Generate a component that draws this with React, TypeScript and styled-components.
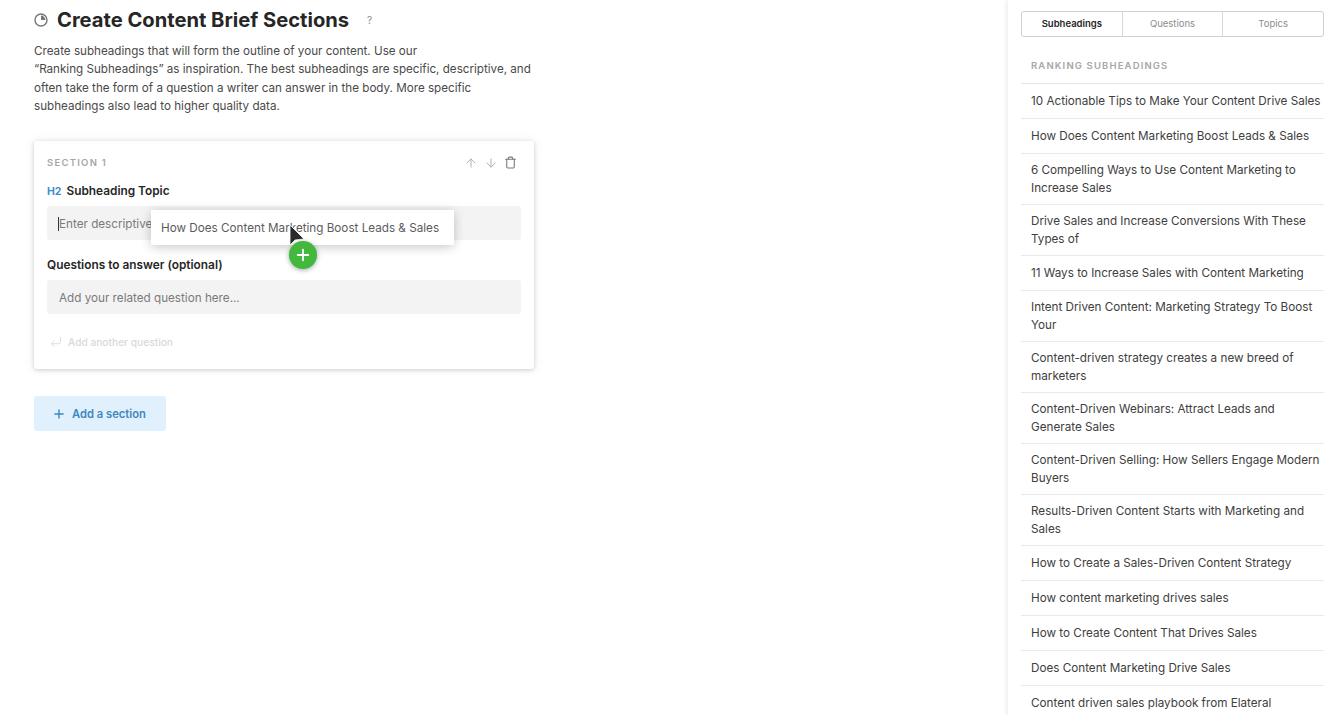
import React from "react";
import styled, { createGlobalStyle } from "styled-components";
import { ArrowUp, ArrowDown, Trash, CornerDownLeft, Plus } from "lucide-react";

const GlobalStyle = createGlobalStyle`
  html, body {
    margin: 0;
    height: 100%;
    overflow: hidden;
    background: #fff;
    font-family: Inter, "Liberation Sans", sans-serif;
    color: #333;
  }
  * { box-sizing: border-box; }
`;

const Page = styled.div`
  display: flex;
  justify-content: space-between;
  width: 1341px;
  height: 715px;
  overflow: hidden;
`;

const Main = styled.main`
  width: 534px;
  margin-left: 34px;
  padding-top: 8px;
`;

const TitleRow = styled.div`
  display: flex;
  align-items: center;
  height: 24px;
`;

const Title = styled.h1`
  margin: 0 0 0 9px;
  font-size: 20.15px;
  line-height: 24px;
  font-weight: 700;
  color: #262626;
`;

const Help = styled.span`
  margin-left: 18px;
  font-size: 10px;
  color: #8c8c8c;
`;

const Intro = styled.p`
  margin: 10px 0 0;
  width: 500px;
  font-size: 11.65px;
  line-height: 18.4px;
  color: #4a4a4a;
`;

const Card = styled.section`
  position: relative;
  width: 500px;
  height: 228px;
  margin-top: 25px;
  padding: 13px 13px 0;
  border-radius: 3px;
  background: #fff;
  box-shadow: 0 1px 4px rgba(0, 0, 0, 0.16), 0 0 12px rgba(0, 0, 0, 0.07);
`;

const CardHead = styled.div`
  display: flex;
  align-items: center;
  justify-content: space-between;
  height: 18px;
`;

const Eyebrow = styled.div`
  font-size: 9.5px;
  font-weight: 600;
  letter-spacing: 1.25px;
  color: #a6a6a6;
`;

const Tools = styled.div`
  display: flex;
  align-items: center;
  gap: 6px;
  margin-right: 4px;
  color: #b0b0b0;
`;

const LabelRow = styled.div`
  display: flex;
  align-items: baseline;
  gap: 5px;
  height: 18px;
  margin-top: 10px;
`;

const Tag = styled.span`
  font-size: 10.5px;
  font-weight: 700;
  color: #3d8fc4;
`;

const Label = styled.label`
  font-size: 11.85px;
  line-height: 18px;
  font-weight: 600;
  color: #262626;
`;

const Field = styled.div<{ $caret?: boolean }>`
  display: flex;
  align-items: center;
  height: 34px;
  margin-top: 6px;
  padding: 2px 0 0 12px;
  border-radius: 3px;
  background: #f3f3f3;
  font-size: 11.7px;
  color: #7a7a7a;
  ${(p) => p.$caret && "span { margin-left: -1px; border-left: 1px solid #333; }"}
`;

const QuestionLabel = styled(Label)`
  display: block;
  margin-top: 16px;
`;

const AddAnother = styled.div`
  display: flex;
  align-items: center;
  gap: 5px;
  margin-top: 21px;
  margin-left: 2px;
  font-size: 10.2px;
  font-weight: 500;
  color: #d9d9d9;
`;

const DragChip = styled.div`
  position: absolute;
  left: 117px;
  top: 69px;
  display: flex;
  align-items: center;
  width: 303px;
  height: 35px;
  padding: 2px 0 0 10px;
  background: #fff;
  font-size: 11.7px;
  color: #5c5c5c;
  box-shadow: 0 2px 10px rgba(0, 0, 0, 0.22);
`;

const Pointer = styled.svg`
  position: absolute;
  left: 255px;
  top: 83px;
`;

const DropBadge = styled.div`
  position: absolute;
  left: 255px;
  top: 100px;
  display: flex;
  align-items: center;
  justify-content: center;
  width: 28px;
  height: 28px;
  border-radius: 50%;
  background: #42b83d;
  color: #fff;
  box-shadow: 0 1px 5px rgba(0, 0, 0, 0.35);
`;

const AddSection = styled.button`
  display: flex;
  align-items: center;
  gap: 6px;
  width: 131.5px;
  height: 35px;
  margin-top: 27px;
  padding: 1px 0 0 18px;
  border: 0;
  border-radius: 3px;
  background: #e0f0fd;
  font-family: inherit;
  font-size: 11.2px;
  font-weight: 600;
  color: #3d87bd;
`;

const Sidebar = styled.aside`
  width: 333px;
  height: 715px;
  padding: 11px 17px 0 13px;
  background: #fff;
  box-shadow: -1px 0 5px rgba(0, 0, 0, 0.09);
`;

const Tabs = styled.div`
  display: flex;
  height: 26px;
  border: 1px solid #d0d0d0;
  border-radius: 3px;
`;

const Tab = styled.div<{ $active?: boolean }>`
  flex: 1;
  display: flex;
  align-items: center;
  justify-content: center;
  padding-bottom: 1px;
  font-size: 9.5px;
  font-weight: ${(p) => (p.$active ? 600 : 400)};
  color: ${(p) => (p.$active ? "#262626" : "#8c8c8c")};
  & + & {
    border-left: 1px solid #d8d8d8;
  }
`;

const ListHeading = styled.div`
  height: 47px;
  padding: 23px 0 0 10px;
  border-bottom: 1px solid #e6e6e6;
  font-size: 9.5px;
  line-height: 12px;
  font-weight: 600;
  letter-spacing: 1.15px;
  color: #a6a6a6;
`;

const List = styled.ul`
  margin: 0;
  padding: 0;
  list-style: none;
`;

const Item = styled.li`
  display: flex;
  align-items: center;
  min-height: 35px;
  padding: 7px 0 7px 10px;
  border-bottom: 1px solid #e9e9e9;
  font-size: 11.7px;
  line-height: 18px;
  color: #404040;
`;

const subheadings = [
  "10 Actionable Tips to Make Your Content Drive Sales",
  "How Does Content Marketing Boost Leads & Sales",
  "6 Compelling Ways to Use Content Marketing to Increase Sales",
  "Drive Sales and Increase Conversions With These Types of",
  "11 Ways to Increase Sales with Content Marketing",
  "Intent Driven Content: Marketing Strategy To Boost Your",
  "Content-driven strategy creates a new breed of marketers",
  "Content-Driven Webinars: Attract Leads and Generate Sales",
  "Content-Driven Selling: How Sellers Engage Modern Buyers",
  "Results-Driven Content Starts with Marketing and Sales",
  "How to Create a Sales-Driven Content Strategy",
  "How content marketing drives sales",
  "How to Create Content That Drives Sales",
  "Does Content Marketing Drive Sales",
  "Content driven sales playbook from Elateral",
];

const ProgressIcon = () => (
  <svg width="14" height="14" viewBox="0 0 14 14" fill="none">
    <circle cx="7" cy="7" r="6" stroke="#777" strokeWidth="1.4" />
    <path d="M7 2.6 A4.4 4.4 0 0 1 11.4 7 L7 7 Z" fill="#777" />
  </svg>
);

const App: React.FC = () => {
  return (
    <Page>
      <GlobalStyle />
      <Main>
        <TitleRow>
          <ProgressIcon />
          <Title>Create Content Brief Sections</Title>
          <Help>?</Help>
        </TitleRow>
        <Intro>
          Create subheadings that will form the outline of your content. Use our
          <br />
          “Ranking Subheadings” as inspiration. The best subheadings are specific, descriptive, and
          often take the form of a question a writer can answer in the body. More specific
          subheadings also lead to higher quality data.
        </Intro>

        <Card>
          <CardHead>
            <Eyebrow>SECTION 1</Eyebrow>
            <Tools>
              <ArrowUp size={14} strokeWidth={1.7} />
              <ArrowDown size={14} strokeWidth={1.7} />
              <Trash size={13} strokeWidth={2} color="#7a7a7a" />
            </Tools>
          </CardHead>
          <LabelRow>
            <Tag>H2</Tag>
            <Label>Subheading Topic</Label>
          </LabelRow>
          <Field $caret>
            <span>Enter descriptive</span>
          </Field>
          <QuestionLabel>Questions to answer (optional)</QuestionLabel>
          <Field>Add your related question here...</Field>
          <AddAnother>
            <CornerDownLeft size={14} strokeWidth={1.5} />
            Add another question
          </AddAnother>

          <DragChip>How Does Content Marketing Boost Leads &amp; Sales</DragChip>
          <Pointer width="16" height="24" viewBox="0 0 16 24">
            <path d="M1 1 L1 21 L6 16 L15 15 Z" fill="#2b2b2b" stroke="#fff" strokeWidth="0.8" />
          </Pointer>
          <DropBadge>
            <Plus size={18} strokeWidth={2.4} />
          </DropBadge>
        </Card>

        <AddSection>
          <Plus size={14} strokeWidth={2.4} />
          Add a section
        </AddSection>
      </Main>

      <Sidebar>
        <Tabs>
          <Tab $active>Subheadings</Tab>
          <Tab>Questions</Tab>
          <Tab>Topics</Tab>
        </Tabs>
        <ListHeading>RANKING SUBHEADINGS</ListHeading>
        <List>
          {subheadings.map((text) => (
            <Item key={text}>{text}</Item>
          ))}
        </List>
      </Sidebar>
    </Page>
  );
};

export default App;
